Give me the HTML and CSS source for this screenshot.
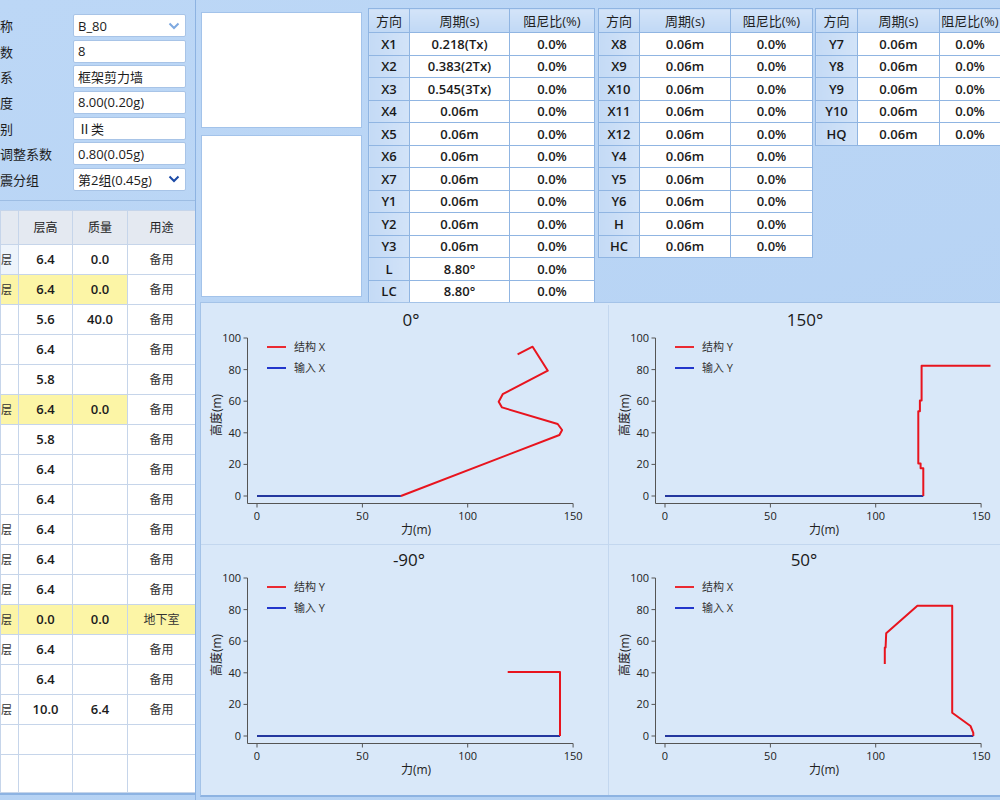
FILE: index.html
```html
<!DOCTYPE html>
<html lang="zh-CN">
<head>
    <meta charset="UTF-8">
    <meta name="viewport" content="width=device-width, initial-scale=1.0">
    <title>动力特性分析</title>
    <link rel="stylesheet" href="styles.css">
</head>

<body>
    <div class="app">
        <aside class="side">
            <div class="form">
                <label>称</label>
                <div class="field">B_80
                    <svg class="chev" width="12" height="8" viewBox="0 0 12 8"><polyline points="1.5,1.5 6,6 10.5,1.5" stroke="#7ea9e0" /></svg>
                </div>
                <label>数</label>
                <div class="field">8</div>
                <label>系</label>
                <div class="field">框架剪力墙</div>
                <label>度</label>
                <div class="field">8.00(0.20g)</div>
                <label>别</label>
                <div class="field">Ⅱ类</div>
                <label>调整系数</label>
                <div class="field">0.80(0.05g)</div>
                <label>震分组</label>
                <div class="field">第2组(0.45g)
                    <svg class="chev" width="12" height="8" viewBox="0 0 12 8"><polyline points="1.5,1.5 6,6 10.5,1.5" stroke="#1c4aa6" /></svg>
                </div>
            </div>
            <div class="floors">
                <table class="floor-table">
                    <colgroup><col style="width:18px"><col style="width:54px"><col style="width:55px"><col style="width:68px"></colgroup>
                    <thead>
                        <tr><th></th><th>层高</th><th>质量</th><th>用途</th></tr>
                    </thead>
                    <tbody>
                        <tr><td class="cut first">层</td><td>6.4</td><td>0.0</td><td class="use">备用</td></tr>
                        <tr class="hl"><td class="cut">层</td><td>6.4</td><td>0.0</td><td class="use plain">备用</td></tr>
                        <tr><td></td><td>5.6</td><td>40.0</td><td class="use">备用</td></tr>
                        <tr><td></td><td>6.4</td><td></td><td class="use">备用</td></tr>
                        <tr><td></td><td>5.8</td><td></td><td class="use">备用</td></tr>
                        <tr class="hl"><td class="cut">层</td><td>6.4</td><td>0.0</td><td class="use plain">备用</td></tr>
                        <tr><td></td><td>5.8</td><td></td><td class="use">备用</td></tr>
                        <tr><td></td><td>6.4</td><td></td><td class="use">备用</td></tr>
                        <tr><td></td><td>6.4</td><td></td><td class="use">备用</td></tr>
                        <tr><td class="cut">层</td><td>6.4</td><td></td><td class="use">备用</td></tr>
                        <tr><td class="cut">层</td><td>6.4</td><td></td><td class="use">备用</td></tr>
                        <tr><td class="cut">层</td><td>6.4</td><td></td><td class="use">备用</td></tr>
                        <tr class="hl"><td class="cut">层</td><td>0.0</td><td>0.0</td><td class="use">地下室</td></tr>
                        <tr><td class="cut">层</td><td>6.4</td><td></td><td class="use">备用</td></tr>
                        <tr><td></td><td>6.4</td><td></td><td class="use">备用</td></tr>
                        <tr><td class="cut">层</td><td>10.0</td><td>6.4</td><td class="use">备用</td></tr>
                        <tr><td></td><td></td><td></td><td></td></tr>
                        <tr class="last"><td></td><td></td><td></td><td></td></tr>
                    </tbody>
                </table>
            </div>
        </aside>

        <main class="main">
            <section class="top">
                <div class="thumbs">
                    <div class="thumb thumb-a"></div>
                    <div class="thumb thumb-b"></div>
                </div>

                <table class="modes modes-1">
                    <colgroup><col style="width:41px"><col style="width:100px"><col style="width:85px"></colgroup>
                    <tr><th>方向</th><th>周期(s)</th><th>阻尼比(%)</th></tr>
                    <tr><td>X1</td><td>0.218(Tx)</td><td>0.0%</td></tr>
                    <tr><td>X2</td><td>0.383(2Tx)</td><td>0.0%</td></tr>
                    <tr><td>X3</td><td>0.545(3Tx)</td><td>0.0%</td></tr>
                    <tr><td>X4</td><td>0.06m</td><td>0.0%</td></tr>
                    <tr><td>X5</td><td>0.06m</td><td>0.0%</td></tr>
                    <tr><td>X6</td><td>0.06m</td><td>0.0%</td></tr>
                    <tr><td>X7</td><td>0.06m</td><td>0.0%</td></tr>
                    <tr><td>Y1</td><td>0.06m</td><td>0.0%</td></tr>
                    <tr><td>Y2</td><td>0.06m</td><td>0.0%</td></tr>
                    <tr><td>Y3</td><td>0.06m</td><td>0.0%</td></tr>
                    <tr><td>L</td><td>8.80°</td><td>0.0%</td></tr>
                    <tr><td>LC</td><td>8.80°</td><td>0.0%</td></tr>
                </table>

                <table class="modes modes-2">
                    <colgroup><col style="width:41px"><col style="width:91px"><col style="width:82px"></colgroup>
                    <tr><th>方向</th><th>周期(s)</th><th>阻尼比(%)</th></tr>
                    <tr><td>X8</td><td>0.06m</td><td>0.0%</td></tr>
                    <tr><td>X9</td><td>0.06m</td><td>0.0%</td></tr>
                    <tr><td>X10</td><td>0.06m</td><td>0.0%</td></tr>
                    <tr><td>X11</td><td>0.06m</td><td>0.0%</td></tr>
                    <tr><td>X12</td><td>0.06m</td><td>0.0%</td></tr>
                    <tr><td>Y4</td><td>0.06m</td><td>0.0%</td></tr>
                    <tr><td>Y5</td><td>0.06m</td><td>0.0%</td></tr>
                    <tr><td>Y6</td><td>0.06m</td><td>0.0%</td></tr>
                    <tr><td>H</td><td>0.06m</td><td>0.0%</td></tr>
                    <tr><td>HC</td><td>0.06m</td><td>0.0%</td></tr>
                </table>

                <table class="modes modes-3">
                    <colgroup><col style="width:42px"><col style="width:82px"><col style="width:61px"></colgroup>
                    <tr><th>方向</th><th>周期(s)</th><th>阻尼比(%)</th></tr>
                    <tr><td>Y7</td><td>0.06m</td><td>0.0%</td></tr>
                    <tr><td>Y8</td><td>0.06m</td><td>0.0%</td></tr>
                    <tr><td>Y9</td><td>0.06m</td><td>0.0%</td></tr>
                    <tr><td>Y10</td><td>0.06m</td><td>0.0%</td></tr>
                    <tr><td>HQ</td><td>0.06m</td><td>0.0%</td></tr>
                </table>
            </section>

            <section class="charts">
                <div class="chart" id="chart0"></div>
                <div class="chart" id="chart1"></div>
                <div class="chart" id="chart2"></div>
                <div class="chart" id="chart3"></div>
            </section>
        </main>
    </div>

    <script>
        // 力(m) 0-150 / 高度(m) 0-100
        const charts = [
            { title: '0°', tx: 210, dir: 'X', input: 68.3,
              line: [[68.3, 0], [143.5, 38.6], [144.8, 41.8], [142.7, 45.6], [116.3, 56.1], [114.7, 59.7], [116.6, 64.4], [138, 79.3], [130.8, 94.5], [123.7, 89.7]] },
            { title: '150°', tx: 196, dir: 'Y', input: 122.6,
              line: [[122.6, 0], [122.6, 17.5], [121.3, 17.5], [121.3, 20.5], [120.2, 20.5], [120.2, 53.6], [121, 53.6], [121, 60.5], [121.8, 60.5], [121.8, 82.5], [154.5, 82.5]] },
            { title: '-90°', tx: 208, dir: 'Y', input: 143.8,
              line: [[143.8, 0], [143.8, 40.5], [119, 40.5]] },
            { title: '50°', tx: 195, dir: 'X', input: 146.3,
              line: [[104.3, 45.5], [104.3, 56], [104.7, 56], [105, 65], [119.8, 82.5], [136.3, 82.5], [136.3, 14.7], [145, 6.3], [146.3, 2], [146.3, 0]] }
        ];

        const sx = v => (56 + v * 2.107).toFixed(1);
        const sy = v => (191 - v * 1.58).toFixed(1);

        function drawChart (el, c) {
            let s = '<svg class="plot" width="408" height="250" viewBox="0 0 408 250">';
            s += `<text class="plot-title" x="${c.tx}" y="21" text-anchor="middle">${c.title}</text>`;
            s += `<path class="axis" d="M46.5 ${sy(100)}V198.5H${sx(150)}"/>`;
            [0, 20, 40, 60, 80, 100].forEach(v => {
                s += `<path class="axis" d="M42.5 ${sy(v)}H46.5"/>`;
                s += `<text class="tick" x="40" y="${(+sy(v) + 4).toFixed(1)}" text-anchor="end">${v}</text>`;
            });
            [0, 50, 100, 150].forEach(v => {
                s += `<path class="axis" d="M${sx(v)} 198.5V202.5"/>`;
                s += `<text class="tick" x="${sx(v)}" y="215" text-anchor="middle">${v}</text>`;
            });
            s += '<text class="axis-label" x="215" y="229" text-anchor="middle">力(m)</text>';
            s += '<text class="axis-label" transform="translate(20 110) rotate(-90)" text-anchor="middle">高度(m)</text>';
            // 图例
            s += '<path class="leg-red" d="M66 42H85"/>';
            s += `<text class="legend" x="93" y="46">结构 ${c.dir}</text>`;
            s += '<path class="leg-blue" d="M66 63H85"/>';
            s += `<text class="legend" x="93" y="67">输入 ${c.dir}</text>`;
            s += `<polyline class="input" points="${sx(0)},${sy(0)} ${sx(c.input)},${sy(0)}"/>`;
            s += `<polyline class="struct" points="${c.line.map(p => sx(p[0]) + ',' + sy(p[1])).join(' ')}"/>`;
            s += '</svg>';
            el.innerHTML = s;
        }

        charts.forEach((c, i) => drawChart(document.getElementById('chart' + i), c));
    </script>
</body>

</html>
```

FILE: styles.css
```css
body {
    margin: 0;
    width: 1000px;
    height: 800px;
    overflow: hidden;
    background: linear-gradient(160deg, #bcd7f6 0%, #b4d1f3 100%);
    font-family: 'Open Sans', 'Noto Sans CJK SC', sans-serif;
    color: #1b1b1b;
}

.app {
    display: flex;
    height: 800px;
}

/* 左侧参数 */
.side {
    width: 195px;
    flex: none;
    border-right: 1px solid #8db3e2;
    display: flex;
    flex-direction: column;
}

.form {
    display: grid;
    grid-template-columns: 73px 113px;
    grid-auto-rows: 23px;
    row-gap: 2.67px;
    align-items: center;
    padding: 14px 0 9px;
    border-bottom: 1px solid #9dbde3;
    font-size: 13px;
}

.form label {
    white-space: nowrap;
    color: #1e1e1e;
}

.field {
    height: 23px;
    box-sizing: border-box;
    display: flex;
    align-items: center;
    justify-content: space-between;
    padding: 0 5px 0 4px;
    background: #fff;
    border: 1px solid #a8c4e7;
    border-radius: 2px;
    white-space: nowrap;
}

.chev polyline {
    fill: none;
    stroke-width: 2;
}

.floors {
    margin-top: 9px;
    height: 583px;
    background: #fff;
    border-bottom: 2px solid #8db3e2;
    overflow: hidden;
}

.floor-table {
    width: 195px;
    table-layout: fixed;
    border-collapse: collapse;
    font-size: 13px;
}

.floor-table th,
.floor-table td {
    border: 1px solid #c6d5ea;
    text-align: center;
    padding: 0;
    white-space: nowrap;
}

.floor-table th {
    height: 33px;
    background: #e4e9f1;
    font-weight: 400;
    font-size: 12px;
    color: #222;
}

.floor-table td {
    height: 29px;
    font-weight: 600;
}

.floor-table td.use {
    font-weight: 400;
    font-size: 12px;
    color: #333;
}

.floor-table td.cut {
    text-align: left;
    font-weight: 400;
    font-size: 11px;
    color: #333;
}

.floor-table td.first {
    background: #eef4fb;
}

.floor-table tr.hl td {
    background: #fcf5a6;
}

.floor-table tr.hl td.plain {
    background: #fff;
}

.floor-table tr.last td {
    height: 37px;
}

/* 右侧 */
.main {
    flex: 1;
    display: flex;
    flex-direction: column;
    min-width: 0;
}

.top {
    height: 302px;
    display: flex;
    align-items: flex-start;
    overflow: hidden;
}

.thumbs {
    width: 161px;
    flex: none;
    margin: 12px 6px 0 5px;
    display: flex;
    flex-direction: column;
    gap: 7px;
}

.thumb {
    background: #fff;
    border: 1px solid #a3c3ea;
    box-sizing: border-box;
}

.thumb-a {
    height: 116px;
}

.thumb-b {
    height: 162px;
}

.modes {
    flex: none;
    margin-top: 8px;
    table-layout: fixed;
    border-collapse: collapse;
    font-size: 13px;
}

.modes-1 {
    width: 226px;
    margin-right: 3px;
}

.modes-2 {
    width: 214px;
    margin-right: 2px;
}

.modes-3 {
    width: 185px;
}

.modes th,
.modes td {
    border: 1px solid #90b5e2;
    text-align: center;
    padding: 0;
    white-space: nowrap;
}

.modes th {
    height: 23px;
    font-weight: 400;
    color: #1e1e1e;
    background: linear-gradient(#d3e4f8, #c0d8f5);
}

.modes td {
    height: 21.5px;
    background: #fff;
    font-weight: 600;
    color: #1a1a1a;
}

.modes td:first-child {
    background: linear-gradient(90deg, #c4daf5, #d2e3f8);
}

/* 曲线 */
.charts {
    flex: 1;
    margin-left: 4px;
    margin-bottom: 3px;
    padding-top: 2px;
    display: grid;
    grid-template-columns: 408px 408px;
    grid-template-rows: 240px 1fr;
    background: #d9e8f9;
    border-top: 1px solid #a4c3e8;
    border-left: 1px solid #a4c3e8;
    border-bottom: 2px solid #8db3e2;
    overflow: hidden;
}

.chart {
    overflow: hidden;
}

.chart:nth-child(1),
.chart:nth-child(3) {
    border-right: 1px solid #c3d7ef;
}

.chart:nth-child(1),
.chart:nth-child(2) {
    border-bottom: 1px solid #c3d7ef;
}

.plot {
    display: block;
}

.plot-title {
    font-size: 17px;
    fill: #1a1a1a;
}

.tick {
    font-size: 11px;
    fill: #222;
}

.axis-label {
    font-size: 12px;
    fill: #222;
}

.legend {
    font-size: 11px;
    fill: #333;
}

.axis {
    stroke: #555;
    stroke-width: 1;
    fill: none;
}

.leg-red {
    stroke: #ea2a32;
    stroke-width: 2;
}

.leg-blue {
    stroke: #2236cc;
    stroke-width: 2;
}

.input {
    fill: none;
    stroke: #24379f;
    stroke-width: 2;
}

.struct {
    fill: none;
    stroke: #e8141e;
    stroke-width: 2;
    stroke-linejoin: round;
}
```
